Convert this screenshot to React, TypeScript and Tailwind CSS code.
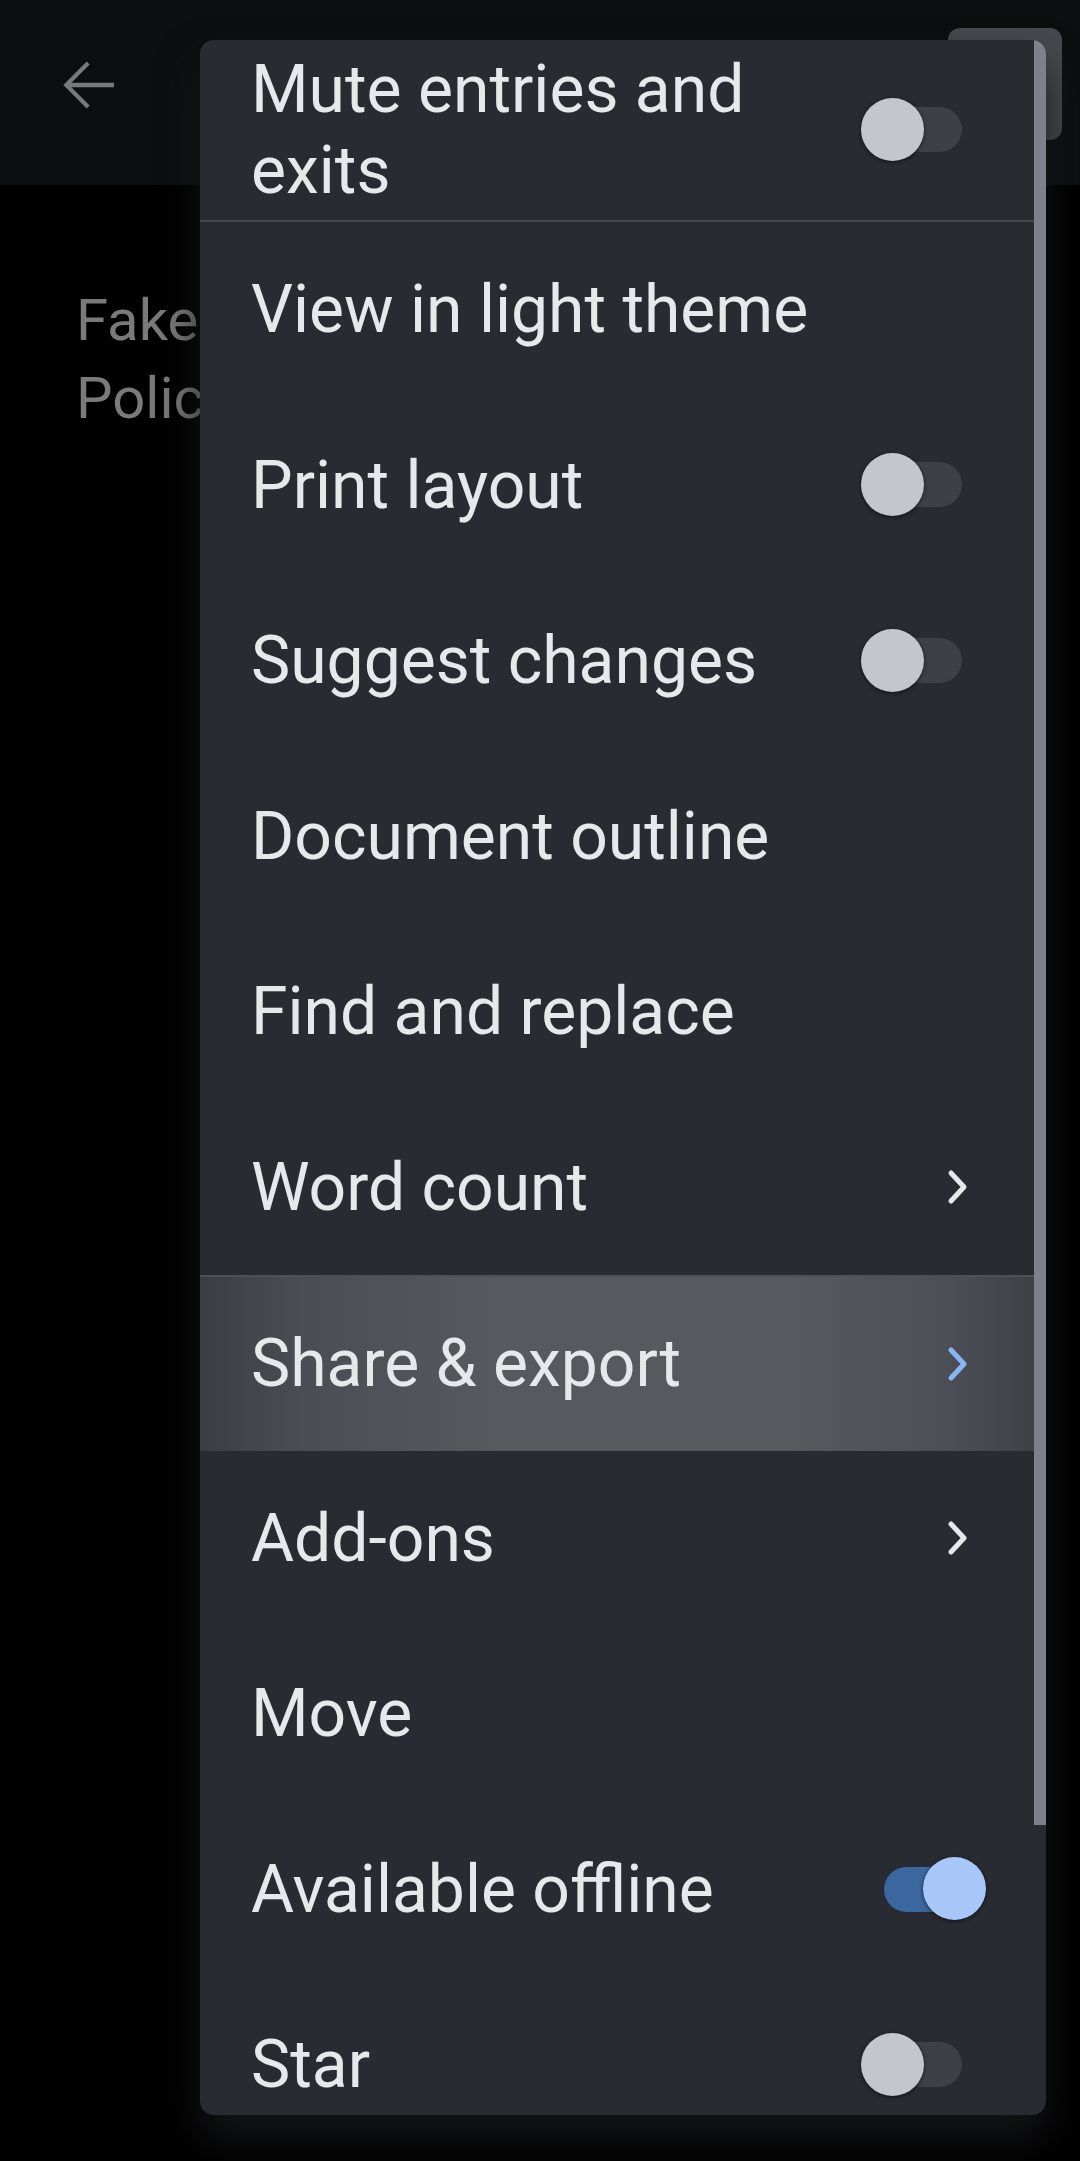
import React from "react";

type Item = {
  label: string;
  kind: "toggle-off" | "toggle-on" | "chevron" | "none";
  active?: boolean;
};

const items: Item[] = [
  { label: "View in light theme", kind: "none" },
  { label: "Print layout", kind: "toggle-off" },
  { label: "Suggest changes", kind: "toggle-off" },
  { label: "Document outline", kind: "none" },
  { label: "Find and replace", kind: "none" },
  { label: "Word count", kind: "chevron" },
  { label: "Share & export", kind: "chevron", active: true },
  { label: "Add-ons", kind: "chevron" },
  { label: "Move", kind: "none" },
  { label: "Available offline", kind: "toggle-on" },
  { label: "Star", kind: "toggle-off" },
];

const Toggle = ({ on }: { on: boolean }) => {
  if (on) {
    return (
      <div className="relative w-[124px] h-[64px] shrink-0">
        <div className="absolute left-[23px] top-[10px] w-[92px] h-[45px] rounded-full bg-[#3b679f]" />
        <div className="absolute left-[62px] top-0 w-[63px] h-[63px] rounded-full bg-[#a8c7f8] shadow-[0_1px_4px_rgba(0,0,0,0.6)]" />
      </div>
    );
  }
  return (
    <div className="relative w-[124px] h-[64px] shrink-0">
      <div className="absolute left-[6px] top-[9px] w-[95px] h-[45px] rounded-full bg-[#3e4047]" />
      <div className="absolute left-0 top-0 w-[63px] h-[63px] rounded-full bg-[#c3c6cc] shadow-[0_1px_4px_rgba(0,0,0,0.6)]" />
    </div>
  );
};

const Chevron = ({ active }: { active?: boolean }) => (
  <div className="w-[124px] shrink-0 flex justify-end pr-[14px]">
    <svg width="26" height="38" viewBox="0 0 26 38" fill="none">
      <path
        d="M6 5 L19 19 L6 33"
        stroke={active ? "#8ab4f8" : "#e6e8eb"}
        strokeWidth="5"
        strokeLinecap="round"
        strokeLinejoin="round"
      />
    </svg>
  </div>
);

const MenuRow = ({ item }: { item: Item }) => (
  <div
    className={
      item.active
        ? "h-[175.5px] flex items-center justify-between pl-[51px] pr-[61px] bg-[linear-gradient(90deg,#3a3d43_0%,#4a4d53_12%,#56595e_35%,#56595e_70%,#4c4f55_88%,#3c3f45_100%)] border-t-2 border-[#4d5056]"
        : "h-[175.5px] flex items-center justify-between pl-[51px] pr-[61px]"
    }
  >
    <span className="text-[66px] leading-[81px] text-[#e6e8eb]">{item.label}</span>
    {item.kind === "toggle-off" && <Toggle on={false} />}
    {item.kind === "toggle-on" && <Toggle on={true} />}
    {item.kind === "chevron" && <Chevron active={item.active} />}
  </div>
);

export default function App() {
  return (
    <div
      className="relative w-[1080px] h-[2161px] bg-black overflow-hidden"
      style={{ fontFamily: "Roboto, 'Noto Sans', sans-serif" }}
    >
      <div className="h-[185px] bg-[#0d0e10] flex items-start justify-between">
        <svg className="ml-[49px] mt-[46px]" width="78" height="78" viewBox="0 0 24 24" fill="#77787b">
          <path d="M20 11.3H6.9l5.6-5.6-0.9-0.9L4.4 12l7.2 7.2 0.9-0.9-5.6-5.6H20z" />
        </svg>
        <div className="mt-[28px] mr-[18px] w-[114px] h-[112px] rounded-[12px] bg-[#46494f]" />
      </div>

      <div className="ml-[76px] w-[124px] overflow-hidden whitespace-nowrap pt-[96px] text-[58px] leading-[78px] text-[#7a7a7a]">
        <div>Fake News</div>
        <div>Policy</div>
      </div>

      {/* overflow menu */}
      <div className="absolute left-[200px] top-[40px] w-[846px] h-[2075px] rounded-[14px] overflow-hidden bg-[#292b32] shadow-[0_24px_40px_rgba(22,23,27,0.9)]">
        <div className="h-[180px] flex items-center justify-between pl-[51px] pr-[61px]">
          <span className="text-[66px] leading-[81px] text-[#e6e8eb]">
            Mute entries and
            <br />
            exits
          </span>
          <Toggle on={false} />
        </div>
        <div className="h-[2px] bg-[#45484e]" />
        {items.map((item) => (
          <MenuRow key={item.label} item={item} />
        ))}
        <div className="absolute right-0 top-0 w-[12px] h-[1785px] bg-[#7e818a]" />
      </div>
    </div>
  );
}
